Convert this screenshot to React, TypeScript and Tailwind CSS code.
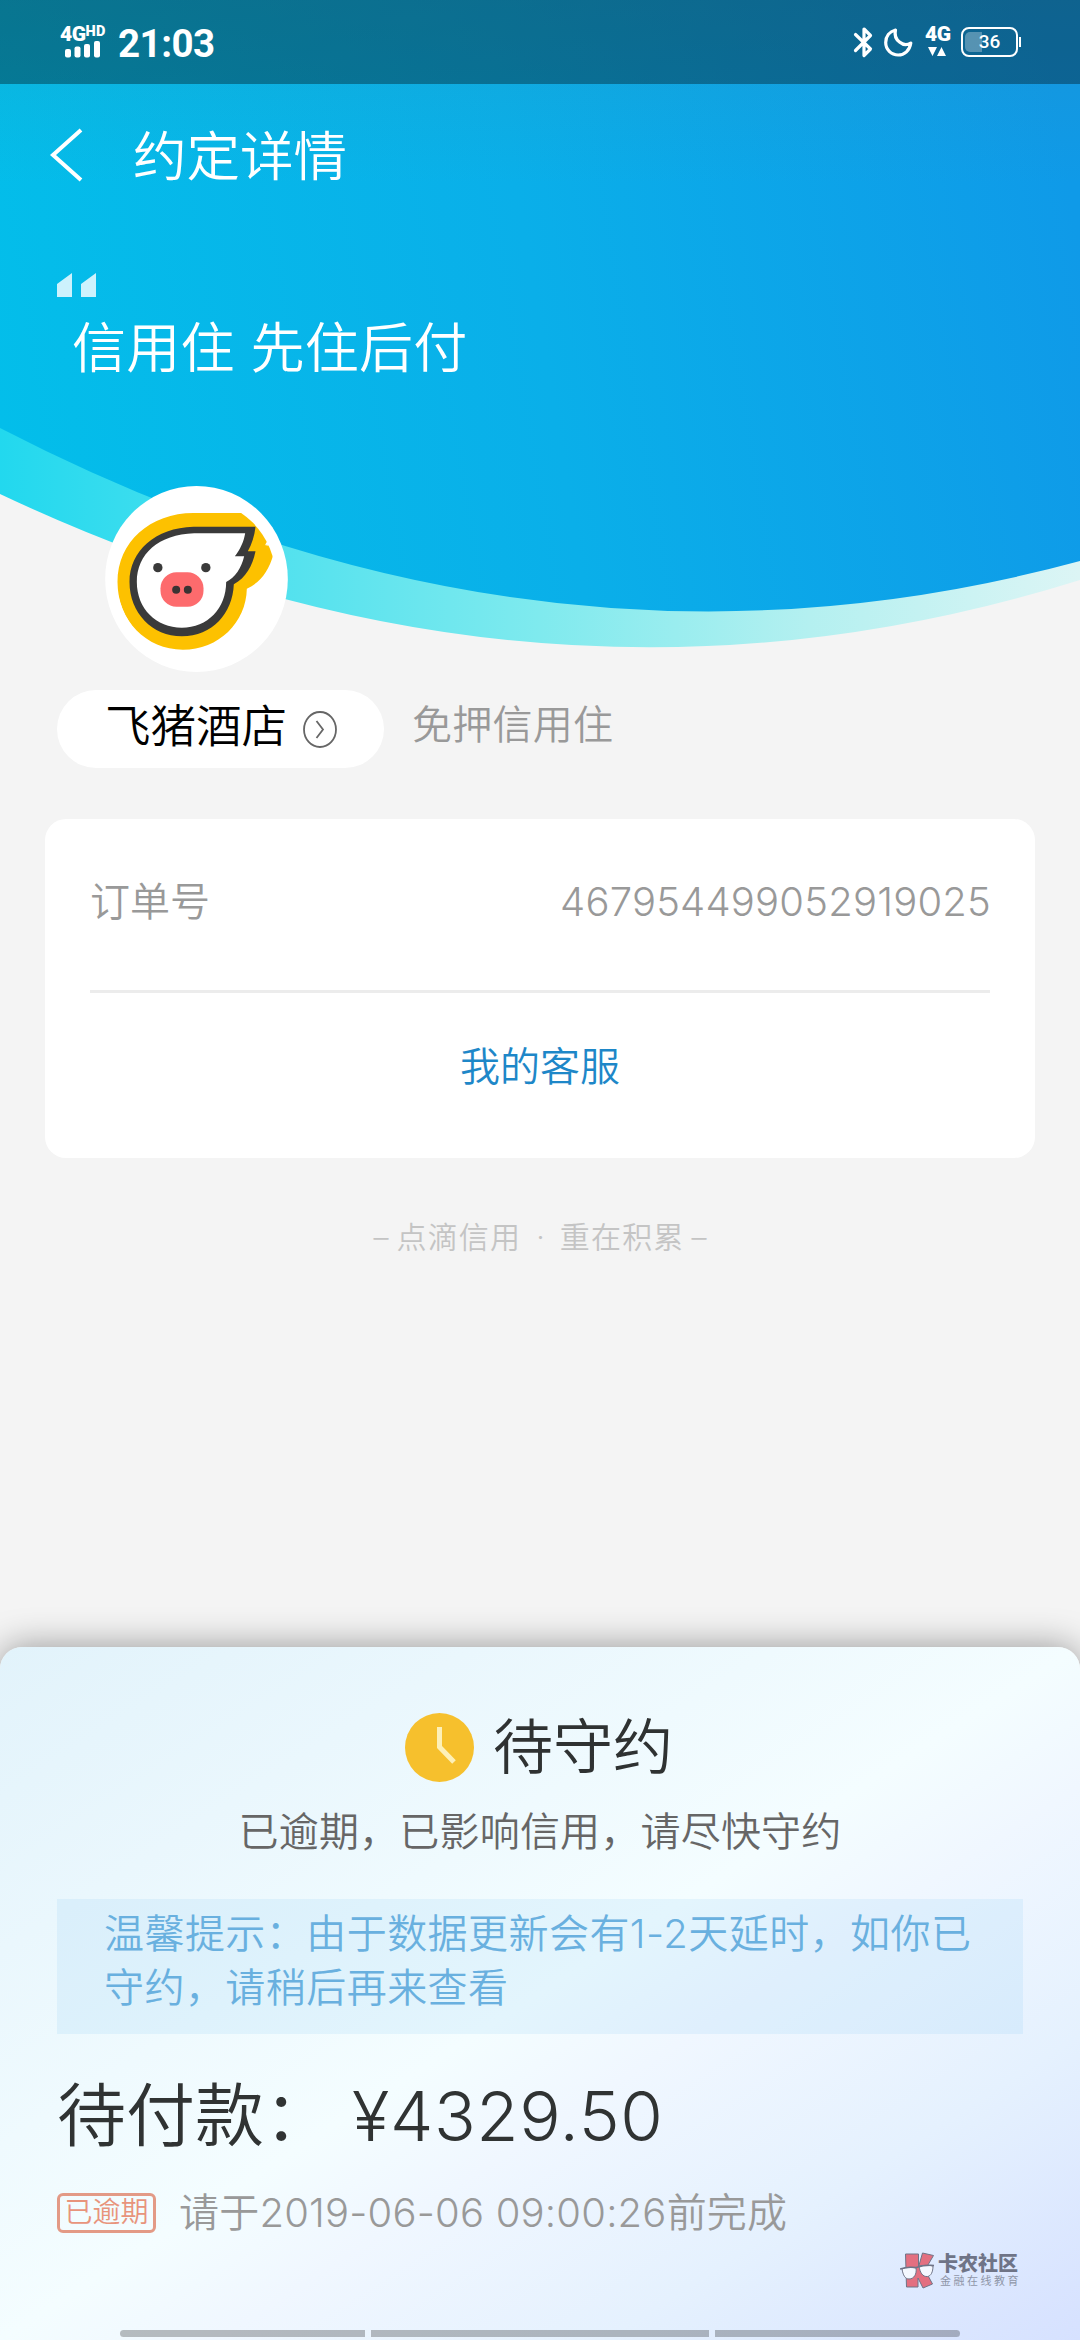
import React from 'react';

const StatusBar: React.FC = () => (
  <div className="h-[84px] bg-black/34 flex items-start justify-between pl-[60px] pr-[59px] text-white">
    <div className="flex items-start pt-[27px]">
      <div className="w-[47px] flex flex-col [font-family:Roboto,sans-serif]">
        <div className="flex items-start font-black leading-none">
          <span className="text-[21px] leading-[15px] tracking-[-0.5px]">4G</span>
          <span className="text-[14.500px] leading-[10px] tracking-[0.3px]">HD</span>
        </div>
        <svg className="ml-[5px] -mt-px" width="36" height="17" viewBox="0 0 36 17" fill="currentColor">
          <rect x="0" y="8" width="6" height="8.500" rx="2" />
          <rect x="9.500" y="5.500" width="6" height="11" rx="2" />
          <rect x="19" y="3" width="6" height="13.500" rx="2" />
          <rect x="29" y="0" width="6" height="16.500" rx="2" />
        </svg>
      </div>
      <span className="ml-[11px] text-[38.500px] leading-[34px] font-bold tracking-[-0.5px] [font-family:Roboto,'Noto_Sans_CJK_SC',sans-serif]">
        21:03
      </span>
    </div>
    <div className="flex items-start pt-[27px]">
      <svg width="20" height="31" viewBox="0 0 20 31" fill="none" stroke="currentColor" strokeWidth="3.200" strokeLinejoin="round" strokeLinecap="round">
        <path d="M2.500 7.500l15 14.500L11 28.500V2l6.500 6.500L2.500 23.500" />
      </svg>
      <svg className="ml-[11px] mt-px" width="29" height="29" viewBox="0 0 29 29" fill="none" stroke="currentColor" strokeWidth="3.200" strokeLinejoin="round">
        <path d="M11.500 2C5.500 3.500 1.700 8.500 1.700 14.500c0 7 5.500 12.500 12.500 12.500 6.300 0 11.500-4.500 12.600-12C23.500 17 19 17 15.500 14 11.500 11 10.500 6.500 11.500 2z" />
      </svg>
      <div className="ml-[12px] w-[26px]">
        <div className="text-[21px] leading-[15px] font-black tracking-[-0.5px] [font-family:Roboto,sans-serif]">4G</div>
        <svg className="ml-[3px] mt-[5px]" width="18" height="9" viewBox="0 0 18 9" fill="currentColor">
          <path d="M0 0h9L4.500 9zM9 9h9L13.500 0z" />
        </svg>
      </div>
      <div className="ml-[10px] relative w-[57px] h-[30px] rounded-[8px] border-2 border-white flex items-center justify-center text-[19px] font-medium [font-family:Roboto,sans-serif]">
        <div className="absolute left-[2px] top-[3px] w-[17px] h-[20px] rounded-l-[5px] bg-white/30" />
        <span className="relative">36</span>
      </div>
      <div className="mt-[10px] ml-px w-[2px] h-[10px] bg-white" />
    </div>
  </div>
);

const PigLogo: React.FC = () => (
  <svg width="183" height="186" viewBox="45 47 548 558">
    <defs>
      <clipPath id="avatar">
        <circle cx="318" cy="325" r="239" />
      </clipPath>
    </defs>
    <ellipse cx="319" cy="326" rx="274" ry="279" fill="#fff" />
    <g clipPath="url(#avatar)">
      <path
        fill="#fdc100"
        d="M580 128H310C180 128 82 215 82 335c0 115 86 203 196 203 108 0 190-82 192-183 40-18 66-52 80-104l10-28h-35z"
      />
      <path fill="#fff" d="M524 224l30-8v14z" />
    </g>
    <path
      fill="#3a3a3a"
      d="M496 169H310C195 172 118 242 118 335c0 92 68 163 157 163 92 0 152-68 156-156 36-20 56-54 65-99h-23c12-22 20-46 23-74z"
    />
    <path
      fill="#fff"
      d="M465 189H312C205 192 140 252 140 335c0 80 58 137 135 137 78 0 133-58 133-137 27-14 45-40 54-77h-28c16-20 27-44 31-69z"
    />
    <circle cx="203" cy="292" r="14" fill="#3a3a3a" />
    <circle cx="347" cy="292" r="14" fill="#3a3a3a" />
    <rect x="211" y="306" width="129" height="103" rx="48" fill="#fd6b6d" />
    <circle cx="258" cy="358" r="12" fill="#3a3333" />
    <circle cx="293" cy="358" r="12" fill="#3a3333" />
  </svg>
);

const Watermark: React.FC = () => (
  <div className="absolute left-[900px] top-[605px] flex">
    <svg width="36" height="37" viewBox="0 0 36 37" stroke="#6f7487" strokeWidth="1">
      <path fill="#e36f80" d="M5.500 2h13v13L22.500 1l11 2.500-8.500 14.500 7.500 14-9.500 4L18 26v9H6.500z" />
      <path fill="#f4f8ff" d="M2 17c4-2 10-2 14-1 1 6-2 11-7 11-4 0-6-4-7-10zM19 14c5-1 9-1 14 0 0 6-2 10-5.500 10.500-5 .5-7.500-4-8.500-10.500z" />
      <path fill="none" strokeWidth="1.500" d="M0 17c5-2 11-2 16-1.500 5-1.500 12-2.500 18-2" />
    </svg>
    <div className="ml-[2px] text-[#6f7487]">
      <div className="mt-[2px] text-[20px] leading-[20px] font-black">卡农社区</div>
      <div className="ml-[2px] mt-px text-[11px] leading-[12px] tracking-[2.500px] font-normal text-[#8f96a8] whitespace-nowrap">
        金融在线教育
      </div>
    </div>
  </div>
);

export default function App() {
  return (
    <div className="w-[1080px] h-[2340px] overflow-hidden bg-[#f4f4f4] flex flex-col font-[350] [font-family:Inter,'Noto_Sans_CJK_SC',sans-serif]">
      {/* Header */}
      <div className="relative h-[690px] shrink-0">
        <svg className="absolute inset-0" width="1080" height="690" viewBox="0 0 1080 690">
          <defs>
            <linearGradient id="sky" gradientUnits="userSpaceOnUse" x1="0" y1="420" x2="1080" y2="240">
              <stop offset="0" stopColor="#03beea" />
              <stop offset="0.5" stopColor="#0aafe9" />
              <stop offset="1" stopColor="#0f9ae8" />
            </linearGradient>
            <linearGradient id="band" x1="0" y1="0" x2="1" y2="0">
              <stop offset="0" stopColor="#22d8ee" />
              <stop offset="0.5" stopColor="#7feaee" />
              <stop offset="0.75" stopColor="#b4f0f0" />
              <stop offset="1" stopColor="#dcf5f5" />
            </linearGradient>
            <linearGradient id="shade" x1="0" y1="0" x2="0" y2="1">
              <stop offset="0" stopColor="#408090" stopOpacity="0.16" />
              <stop offset="0.3" stopColor="#408090" stopOpacity="0" />
            </linearGradient>
          </defs>
          <path fill="url(#band)" d="M0 0V494Q540 749 1080 580V0z" />
          <path fill="url(#sky)" d="M0 0V428Q540 707.500 1080 561V0z" />
          <path fill="url(#shade)" d="M0 0V428Q540 707.500 1080 561V0z" />
        </svg>
        <div className="relative">
          <StatusBar />
          <div className="h-[142px] flex items-center pl-[49px] text-white">
            <svg width="34" height="54" viewBox="0 0 34 54" fill="none" stroke="currentColor" strokeWidth="4">
              <path d="M32 2L4 27l28 25" />
            </svg>
            <h1 className="ml-[50px] mt-[3px] text-[53.500px] leading-[60px] font-[350]">约定详情</h1>
          </div>
          <svg className="ml-[57px] mt-[47px]" width="40" height="24" viewBox="0 0 40 24" fill="#cdf2fd">
            <path d="M0 11L15 0v24H0zM24 11L39 0v24H24z" />
          </svg>
          <p className="ml-[72px] mt-[22px] text-[54px] leading-[60px] tracking-[0.3px] text-white">
            信用住 先住后付
          </p>
          <div className="ml-[105px] mt-[107px]">
            <PigLogo />
          </div>
        </div>
      </div>

      {/* Merchant */}
      <div className="flex items-center ml-[57px] h-[78px] shrink-0">
        <div className="w-[327px] h-[78px] rounded-full bg-white flex items-center pl-[48px]">
          <span className="text-[45.500px] leading-[60px] text-black -mt-[4px]">飞猪酒店</span>
          <svg className="ml-[16px]" width="34" height="37" viewBox="0 0 34 37" fill="none" stroke="#666" strokeWidth="1.800">
            <ellipse cx="17" cy="18.500" rx="16" ry="17.500" />
            <path d="M13.500 10l6.500 8.500-6.500 8.500" />
          </svg>
        </div>
        <span className="ml-[28px] -mt-[8px] text-[40px] leading-[50px] tracking-[0.25px] text-[#999]">免押信用住</span>
      </div>

      {/* Order card */}
      <div className="mx-[45px] mt-[51px] h-[339px] shrink-0 rounded-[21px] bg-white px-[45px]">
        <div className="h-[174px] flex items-center justify-between border-b-3 border-[#ececec] text-[40px] text-[#999]">
          <span className="-mt-[6px]">订单号</span>
          <span className="-mt-[6px] -mr-px font-light tracking-[0.2px]">467954499052919025</span>
        </div>
        <div className="h-[147px] flex items-center justify-center text-[40px] text-[#1e87c8]">我的客服</div>
      </div>
      <div className="mt-[56px] h-[46px] shrink-0 flex justify-center text-[30px] leading-[46px] text-[#c4c4c4]">
        <span>–</span>
        <span className="ml-[8px] tracking-[1.200px]">点滴信用</span>
        <span className="mx-[15px]">·</span>
        <span className="tracking-[1.200px]">重在积累</span>
        <span className="ml-[7px]">–</span>
      </div>

      {/* Bottom sheet */}
      <div className="relative mt-auto h-[693px] shrink-0 rounded-t-[22px] shadow-[0_0_36px_rgba(0,0,0,0.4)] bg-[linear-gradient(to_bottom_right,#e2f3fb_0%,#eaf7fd_22%,#f4fdff_50%,#f0f7ff_60%,#e5f1fe_78%,#d6e1ff_100%)]">
        <div className="pt-[58px] flex justify-center items-center h-[142px]">
          <svg className="mt-px" width="69" height="69" viewBox="0 0 69 69">
            <circle cx="34.500" cy="34.500" r="34.500" fill="#f6c02d" />
            <path d="M34.500 14v20L49 49" fill="none" stroke="#fdf0b8" strokeWidth="5" />
          </svg>
          <h2 className="ml-[19px] mr-[2px] text-[60px] leading-[70px] text-[#2f3232]">待守约</h2>
        </div>
        <p className="mt-[16px] text-center text-[40px] leading-[54px] tracking-[0.200px] text-[#666]">
          已逾期，已影响信用，请尽快守约
        </p>
        <div className="mx-[57px] mt-[40px] h-[135px] bg-[#4db4ea]/10 pl-[47px] pr-[45px] pt-[8px] text-[40px] leading-[54px] tracking-[0.450px] text-[#69b0df]">
          温馨提示：由于数据更新会有1-2天延时，如你已守约，请稍后再来查看
        </div>
        <div className="ml-[57px] mt-[42px] flex items-center text-[69px] leading-[80px] text-[#303333]">
          <span className="w-[295px] whitespace-nowrap">待付款：</span>
          <span className="tracking-[0.600px]">¥4329.50</span>
        </div>
        <div className="ml-[57px] mt-[31px] flex items-center h-[52px]">
          <span className="w-[99px] h-[40px] rounded-[6px] border-[3px] border-[#e39a86] text-center text-[28px] leading-[32px] text-[#e8947c]">
            已逾期
          </span>
          <span className="ml-[23px] text-[40px] leading-[54px] tracking-[0.200px] text-[#999] whitespace-nowrap">
            请于2019-06-06 09:00:26前完成
          </span>
        </div>
        <Watermark />
        <div className="absolute inset-x-[120px] bottom-[3px] h-[7px] flex gap-[6px]">
          <div className="w-[245px] rounded-l-full bg-black/25" />
          <div className="w-[338px] bg-black/25" />
          <div className="w-[245px] rounded-r-full bg-black/25" />
        </div>
      </div>
    </div>
  );
}
